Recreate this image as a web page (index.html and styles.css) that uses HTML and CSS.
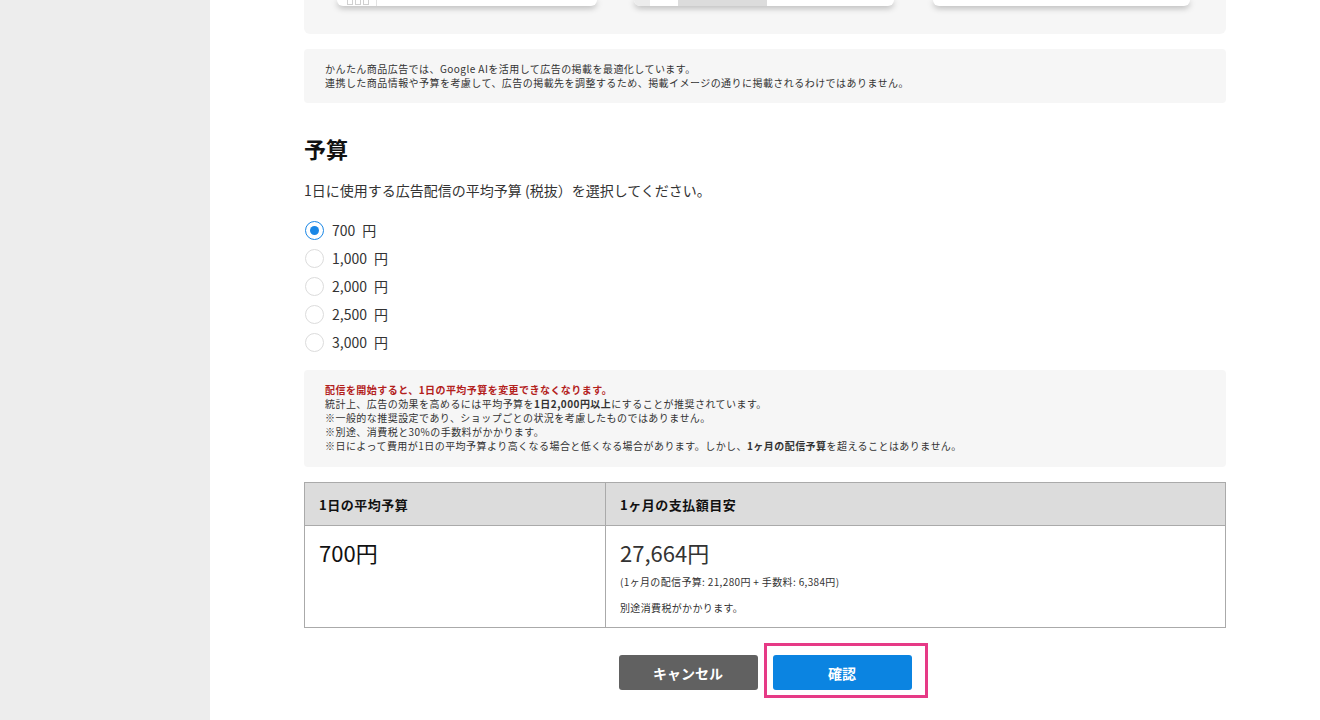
FILE: index.html
```html
<!DOCTYPE html>
<html lang="ja">
<head>
<meta charset="utf-8">
<title>予算</title>
<link rel="stylesheet" href="styles.css">
</head>
<body>
<div class="layout">
  <aside class="sidebar"></aside>
  <main class="main">
    <div class="content">
      <div class="preview-panel">
        <div class="card card-a">
          <div class="mini-boxes"><span></span><span></span><span></span></div>
        </div>
        <div class="card card-b">
          <span class="seg seg-1"></span><span class="seg seg-2"></span><span class="seg seg-3"></span>
        </div>
        <div class="card card-c"></div>
      </div>

      <div class="notice">
        <p>かんたん商品広告では、Google AIを活用して広告の掲載を最適化しています。</p>
        <p>連携した商品情報や予算を考慮して、広告の掲載先を調整するため、掲載イメージの通りに掲載されるわけではありません。</p>
      </div>

      <h2 class="section-title">予算</h2>
      <p class="lead">1日に使用する広告配信の平均予算 (税抜）を選択してください。</p>

      <ul class="radio-list">
        <li class="radio-row"><span class="radio checked"></span><span class="radio-label">700<span class="yen">円</span></span></li>
        <li class="radio-row"><span class="radio"></span><span class="radio-label">1,000<span class="yen">円</span></span></li>
        <li class="radio-row"><span class="radio"></span><span class="radio-label">2,000<span class="yen">円</span></span></li>
        <li class="radio-row"><span class="radio"></span><span class="radio-label">2,500<span class="yen">円</span></span></li>
        <li class="radio-row"><span class="radio"></span><span class="radio-label">3,000<span class="yen">円</span></span></li>
      </ul>

      <div class="notice warning">
        <p class="alert">配信を開始すると、1日の平均予算を変更できなくなります。</p>
        <p>統計上、広告の効果を高めるには平均予算を<b>1日2,000円以上</b>にすることが推奨されています。</p>
        <p>※一般的な推奨設定であり、ショップごとの状況を考慮したものではありません。</p>
        <p>※別途、消費税と30%の手数料がかかります。</p>
        <p>※日によって費用が1日の平均予算より高くなる場合と低くなる場合があります。しかし、<b>1ヶ月の配信予算</b>を超えることはありません。</p>
      </div>

      <table class="summary">
        <thead>
          <tr><th class="col-1">1日の平均予算</th><th>1ヶ月の支払額目安</th></tr>
        </thead>
        <tbody>
          <tr>
            <td class="col-1"><div class="amount dark">700円</div></td>
            <td>
              <div class="amount">27,664円</div>
              <div class="small">(1ヶ月の配信予算: 21,280円 + 手数料: 6,384円)</div>
              <div class="small tax">別途消費税がかかります。</div>
            </td>
          </tr>
        </tbody>
      </table>

      <div class="actions">
        <button class="btn btn-cancel" type="button">キャンセル</button>
        <div class="confirm-wrap">
          <button class="btn btn-confirm" type="button">確認</button>
          <span class="highlight"></span>
        </div>
      </div>
    </div>
  </main>
</div>
</body>
</html>
```

FILE: styles.css
```css
* { box-sizing: border-box; }
html, body { margin: 0; padding: 0; height: 100%; }
body {
  font-family: "Noto Sans CJK JP", "Noto Sans", sans-serif;
  color: #333;
  background: #fff;
  overflow: hidden;
}
p { margin: 0; }

.layout { display: flex; min-height: 720px; }
.sidebar { width: 210px; flex: none; background: #ededed; }
.main { flex: 1; background: #fff; }
.content { width: 922px; margin-left: 94px; }

/* top preview panel */
.preview-panel {
  background: #f6f6f6;
  border-radius: 0 0 6px 6px;
  height: 34px;
  padding: 0 34px 0 33px;
  display: grid;
  grid-template-columns: 260px 260px 259px;
  column-gap: 37px;
  align-items: start;
}
.card {
  height: 6px;
  background: #fff;
  border-radius: 0 0 6px 6px;
  box-shadow: 0 2px 6px rgba(0,0,0,0.28);
  position: relative;
  overflow: hidden;
  display: flex;
}
.card-c { margin-left: 2px; }
.mini-boxes {
  display: flex;
  gap: 2px;
  padding-left: 10px;
  width: 40px;
  height: 6px;
  border-right: 1px solid #e2e2e2;
}
.mini-boxes span {
  width: 6px; height: 5px;
  border: 1px solid #d0d0d0;
  border-top: none;
}
.seg { height: 6px; display: block; }
.seg-1 { width: 16px; background: #ececec; }
.seg-2 { width: 28px; background: #fff; }
.seg-3 { width: 89px; background: #dcdcdc; }

/* notices */
.notice {
  margin-top: 15px;
  background: #f6f6f6;
  border-radius: 4px;
  padding: 13px 21px 13px;
  font-size: 10px;
  line-height: 14px;
  letter-spacing: 0.45px;
  color: #333;
}
.notice b { font-weight: 700; }
.warning { margin-top: 14px; padding: 13px 21px 14px; }
.alert { color: #b3211c; font-weight: 700; }

.section-title {
  margin: 29px 0 0;
  font-size: 22px;
  line-height: 32px;
  font-weight: 700;
  color: #111;
}
.lead {
  margin-top: 16px;
  font-size: 14px;
  line-height: 20px;
  color: #333;
}

.radio-list { list-style: none; margin: 16px 0 0; padding: 0; }
.radio-row {
  height: 28px;
  display: flex;
  align-items: center;
  gap: 8px;
}
.radio {
  width: 19px; height: 19px;
  border-radius: 50%;
  border: 1px solid #dcdcdc;
  background: #fff;
  margin-left: 1px;
  position: relative;
  flex: none;
}
.radio.checked { border: 1.5px solid #1a87e6; }
.radio.checked::after {
  content: "";
  position: absolute;
  left: 50%; top: 50%;
  width: 9px; height: 9px;
  margin: -4.5px 0 0 -4.5px;
  border-radius: 50%;
  background: #1a87e6;
}
.radio-label { font-size: 14px; line-height: 20px; color: #333; }
.yen { margin-left: 7px; }

/* table */
.summary {
  margin-top: 15px;
  width: 100%;
  border-collapse: collapse;
  border: 1px solid #aaa;
  font-size: 13px;
}
.summary th {
  background: #dcdcdc;
  text-align: left;
  font-weight: 700;
  letter-spacing: 0.5px;
  height: 43px;
  padding: 0 14px;
  color: #111;
  border: 1px solid #aaa;
}
.summary td {
  vertical-align: top;
  padding: 11px 14px 12px;
  border: 1px solid #aaa;
}
.summary .col-1 { width: 301px; }
.amount { font-size: 22px; line-height: 30px; color: #333; }
.amount.dark { color: #111; }
.small { font-size: 10px; line-height: 14px; letter-spacing: 0.35px; color: #333; margin-top: 8px; }
.small.tax { margin-top: 12px; }

/* actions */
.actions {
  margin-top: 27px;
  display: flex;
  justify-content: center;
  gap: 15px;
}
.btn {
  width: 139px;
  height: 35px;
  border: none;
  border-radius: 3px;
  color: #fff;
  font-family: "Noto Sans CJK JP", "Noto Sans", sans-serif;
  font-size: 14px;
  font-weight: 700;
  cursor: pointer;
}
.btn-cancel { background: #616161; }
.btn-confirm { background: #0b84e1; display: block; }
.confirm-wrap { position: relative; }
.highlight {
  position: absolute;
  left: -9px; top: -12px;
  width: 164px; height: 55px;
  border: 3px solid #e63a86;
  pointer-events: none;
}
```
